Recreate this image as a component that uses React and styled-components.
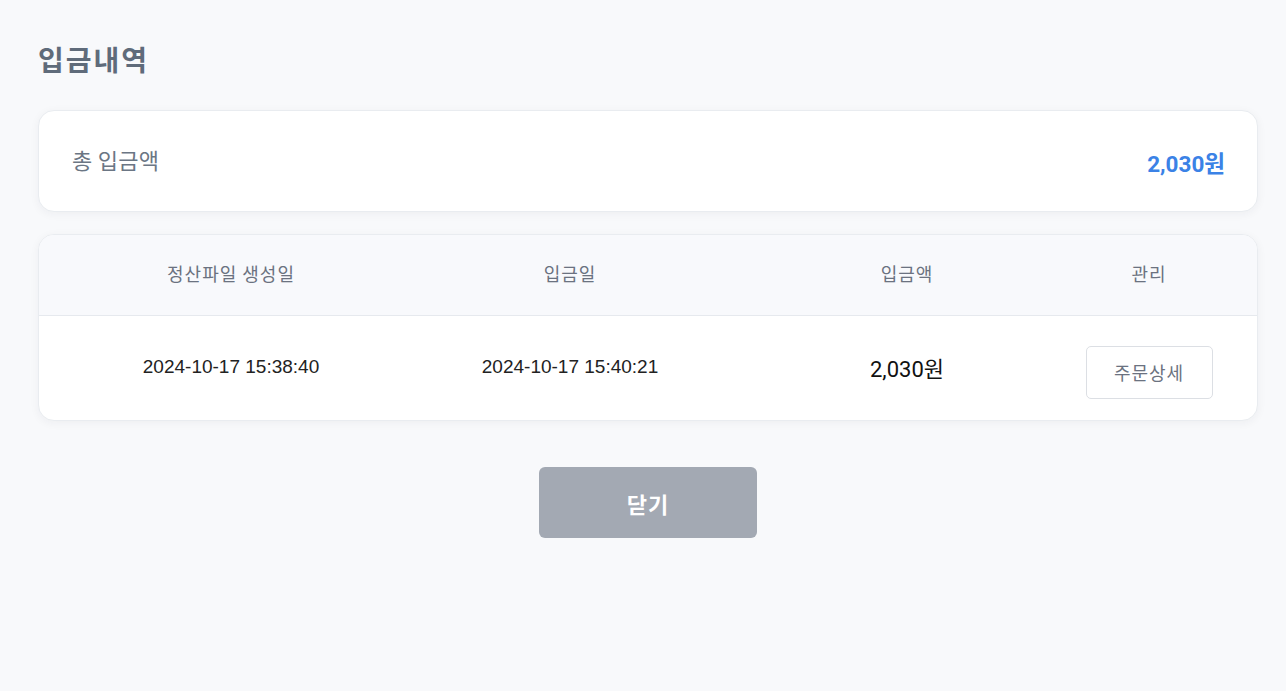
import React from "react";
import styled, { createGlobalStyle } from "styled-components";

const Global = createGlobalStyle`
  html, body { margin: 0; padding: 0; background: #f8f9fb; }
  body { font-family: "Noto Sans CJK KR", "Noto Sans", sans-serif; }
`;

const Page = styled.div`
  padding: 39px 28px 40px 38px;
  display: flex;
  flex-direction: column;
`;

const Title = styled.h1`
  margin: 0 0 31px;
  font-size: 28px;
  line-height: 40px;
  letter-spacing: 2px;
  font-weight: 700;
  color: #5f6b7a;
`;

const Card = styled.div`
  background: #fff;
  border: 1px solid #e9ecf0;
  border-radius: 16px;
  box-shadow: 0 2px 10px rgba(30, 40, 60, 0.05);
  overflow: hidden;
`;

const Summary = styled(Card)`
  height: 100px;
  display: flex;
  align-items: center;
  justify-content: space-between;
  padding: 0 32px 0 33px;
  margin-bottom: 22px;
`;

const SummaryLabel = styled.span`
  font-size: 22px;
  letter-spacing: 0.3px;
  color: #6b7684;
  margin-top: -4px;
`;

const SummaryValue = styled.span`
  font-family: Roboto, "Noto Sans CJK KR", sans-serif;
  font-size: 22.5px;
  font-weight: 700;
  color: #3b82e6;
  margin-top: 2px;
`;

const Grid = styled.div`
  display: grid;
  grid-template-columns: 384px 294px 380px 104px 1fr;
  align-items: center;
`;

const HeadRow = styled(Grid)`
  height: 80px;
  background: #f8f9fc;
  border-bottom: 1px solid #e6e9ee;
`;

const BodyRow = styled(Grid)`
  height: 104px;
`;

const HeadCell = styled.div`
  text-align: center;
  font-size: 18px;
  letter-spacing: 1px;
  color: #6b7280;
  margin-top: -4px;
`;

const Cell = styled.div`
  text-align: center;
  display: flex;
  justify-content: center;
  font-family: ${(p) =>
    p.$amount ? 'Roboto, "Noto Sans CJK KR", sans-serif' : '"Liberation Sans", Arial, sans-serif'};
  font-size: ${(p) => (p.$amount ? "22px" : "19px")};
  color: ${(p) => (p.$amount ? "#111" : "#222")};
  margin-top: -2px;
`;

const ActionCell = styled.div`
  display: flex;
  justify-content: center;
  margin-top: 8px;
`;

const DetailButton = styled.button`
  width: 127px;
  height: 53px;
  flex-shrink: 0;
  background: #fff;
  border: 1px solid #dcdfe4;
  border-radius: 5px;
  font-family: "Noto Sans CJK KR", sans-serif;
  font-size: 18px;
  letter-spacing: 1px;
  color: #6b7280;
  cursor: pointer;
`;

const Footer = styled.div`
  display: flex;
  justify-content: center;
  margin-top: 46px;
`;

const CloseButton = styled.button`
  width: 218px;
  height: 71px;
  border: none;
  border-radius: 6px;
  background: #a3a9b3;
  color: #fff;
  font-family: "Noto Sans CJK KR", sans-serif;
  font-size: 22px;
  letter-spacing: 1px;
  font-weight: 700;
  cursor: pointer;
`;

const rows = [
  { created: "2024-10-17 15:38:40", paid: "2024-10-17 15:40:21", amount: "2,030원" },
];

export default function App() {
  return (
    <>
      <Global />
      <Page>
        <Title>입금내역</Title>
        <Summary>
          <SummaryLabel>총 입금액</SummaryLabel>
          <SummaryValue>2,030원</SummaryValue>
        </Summary>
        <Card>
          <HeadRow>
            <HeadCell>정산파일 생성일</HeadCell>
            <HeadCell>입금일</HeadCell>
            <HeadCell>입금액</HeadCell>
            <HeadCell>관리</HeadCell>
          </HeadRow>
          {rows.map((r, i) => (
            <BodyRow key={i}>
              <Cell>{r.created}</Cell>
              <Cell>{r.paid}</Cell>
              <Cell $amount>{r.amount}</Cell>
              <ActionCell>
                <DetailButton>주문상세</DetailButton>
              </ActionCell>
            </BodyRow>
          ))}
        </Card>
        <Footer>
          <CloseButton>닫기</CloseButton>
        </Footer>
      </Page>
    </>
  );
}
